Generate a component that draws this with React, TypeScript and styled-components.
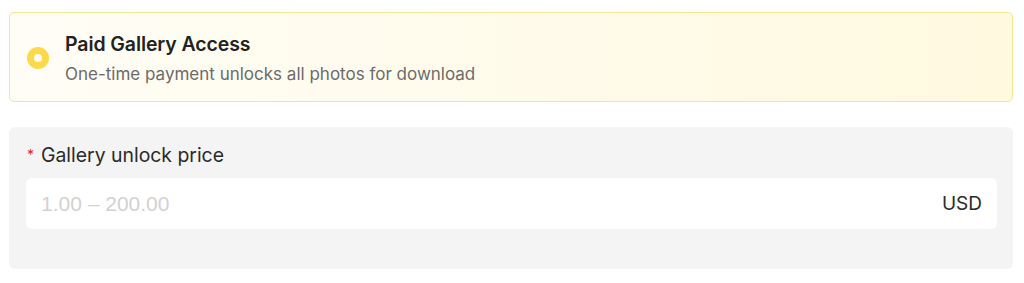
import React from 'react';
import styled, {createGlobalStyle} from "styled-components";

const GlobalStyle = createGlobalStyle`
    html, body {
        margin: 0;
        padding: 0;
        background: #ffffff;
    }
    body {
        font-family: Inter, "Noto Sans", sans-serif;
        -webkit-font-smoothing: antialiased;
    }
`

export default function App() {
    return (
        <>
            <GlobalStyle/>
            <Page>
                <OptionCard>
                    <Radio/>
                    <OptionText>
                        <OptionTitle>Paid Gallery Access</OptionTitle>
                        <OptionHint>One-time payment unlocks all photos for download</OptionHint>
                    </OptionText>
                </OptionCard>

                <FieldPanel>
                    <Label>
                        <Required>*</Required>
                        Gallery unlock price
                    </Label>
                    <InputBox>
                        <Input placeholder="1.00 – 200.00"/>
                        <Suffix>USD</Suffix>
                    </InputBox>
                </FieldPanel>
            </Page>
        </>
    );
}

const Page = styled.div`
    display: flex;
    flex-direction: column;
    gap: 25px;
    padding: 12px 11px 0 9px;
`

const OptionCard = styled.div`
    height: 90px;
    box-sizing: border-box;
    display: flex;
    align-items: center;
    gap: 16px;
    padding: 0 17px;
    border: 1px solid #f3e68e;
    border-radius: 5px;
    background: linear-gradient(90deg, #fffdf6 0%, #fff9e0 100%);
`

const Radio = styled.span`
    width: 22px;
    height: 22px;
    flex: none;
    border-radius: 50%;
    background: #fbd94c;
    display: flex;
    align-items: center;
    justify-content: center;
    margin-top: 2px;

    &::after {
        content: "";
        width: 8px;
        height: 8px;
        border-radius: 50%;
        background: #fffdf2;
    }
`

const OptionText = styled.div`
    display: flex;
    flex-direction: column;
    gap: 8px;
    margin-top: 2px;
`

const OptionTitle = styled.div`
    font-size: 19.5px;
    font-weight: 600;
    color: #222;
    line-height: 24px;
    letter-spacing: -0.1px;
`

const OptionHint = styled.div`
    font-size: 17px;
    color: #6b6b6b;
    line-height: 20px;
`

const FieldPanel = styled.div`
    height: 142px;
    box-sizing: border-box;
    background: #f4f4f4;
    border-radius: 6px;
    padding: 16px 16px 0 17px;
    display: flex;
    flex-direction: column;
    gap: 11px;
`

const Label = styled.label`
    display: flex;
    align-items: center;
    font-size: 19.4px;
    color: #2a2a2a;
    line-height: 24px;
`

const Required = styled.span`
    color: #e0261f;
    font-size: 14px;
    margin-right: 7px;
    margin-left: 1px;
`

const InputBox = styled.div`
    height: 51px;
    box-sizing: border-box;
    background: #fff;
    border-radius: 6px;
    display: flex;
    align-items: center;
    padding: 0 15px 0 15px;
`

const Input = styled.input`
    flex: 1;
    border: none;
    outline: none;
    background: transparent;
    padding: 0;
    font-family: "Liberation Sans", Arial, sans-serif;
    font-size: 21px;
    color: #2a2a2a;

    &::placeholder {
        color: #d2d2d2;
    }
`

const Suffix = styled.span`
    font-size: 19px;
    color: #2a2a2a;
`
